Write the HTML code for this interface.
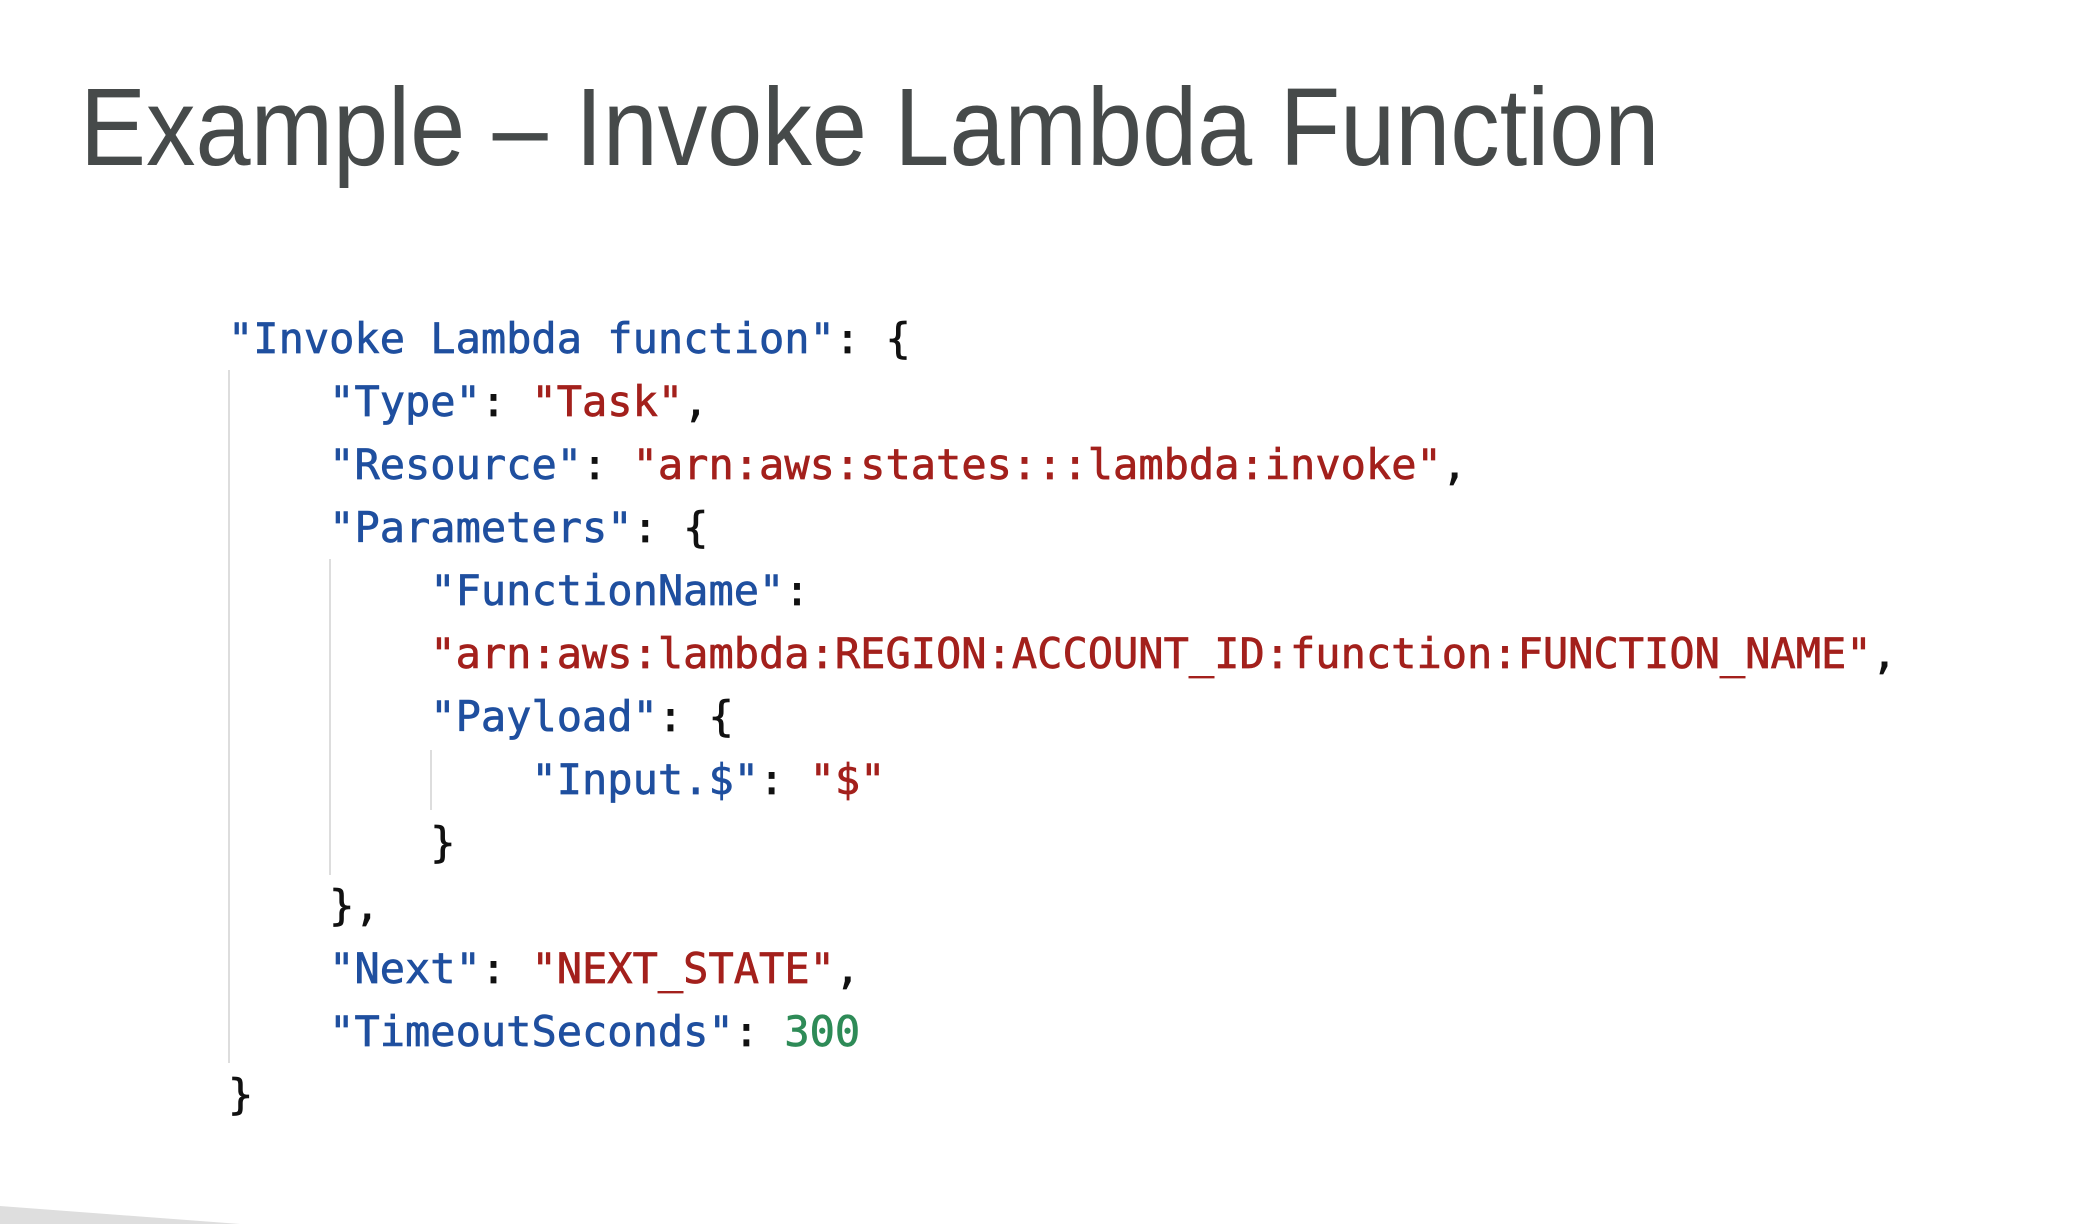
<!DOCTYPE html>
<html><head><meta charset="utf-8"><style>
html,body{margin:0;padding:0;background:#fff;width:2088px;height:1224px;overflow:hidden;position:relative}
.t{position:absolute;left:80px;top:58px;font-family:"Liberation Sans",sans-serif;font-size:110px;color:#464a4a;white-space:nowrap;transform:scaleX(0.9);transform-origin:0 0;line-height:140px}
.c{position:absolute;left:228px;top:307px;font-family:"DejaVu Sans Mono",monospace;font-size:42px;line-height:63px;white-space:pre;color:#111;-webkit-text-stroke:0.7px currentColor}
.k{color:#1f4f9f}.s{color:#a3201c}.n{color:#2e8b57}
.v{position:absolute;width:2px;background:#ddd}
</style></head><body>
<div class="t">Example – Invoke Lambda Function</div>
<div class="v" style="left:228px;top:370px;height:693px"></div>
<div class="v" style="left:329px;top:559px;height:316px"></div>
<div class="v" style="left:430px;top:750px;height:60px"></div>
<div class="c"><span class="k">"Invoke Lambda function"</span>: {
    <span class="k">"Type"</span>: <span class="s">"Task"</span>,
    <span class="k">"Resource"</span>: <span class="s">"arn:aws:states:::lambda:invoke"</span>,
    <span class="k">"Parameters"</span>: {
        <span class="k">"FunctionName"</span>:
        <span class="s">"arn:aws:lambda:REGION:ACCOUNT_ID:function:FUNCTION_NAME"</span>,
        <span class="k">"Payload"</span>: {
            <span class="k">"Input.$"</span>: <span class="s">"$"</span>
        }
    },
    <span class="k">"Next"</span>: <span class="s">"NEXT_STATE"</span>,
    <span class="k">"TimeoutSeconds"</span>: <span class="n">300</span>
}</div>
<svg style="position:absolute;left:0;top:0" width="2088" height="1224"><polygon points="0,1206 240,1224 0,1224" fill="#dedede"/></svg>
</body></html>
